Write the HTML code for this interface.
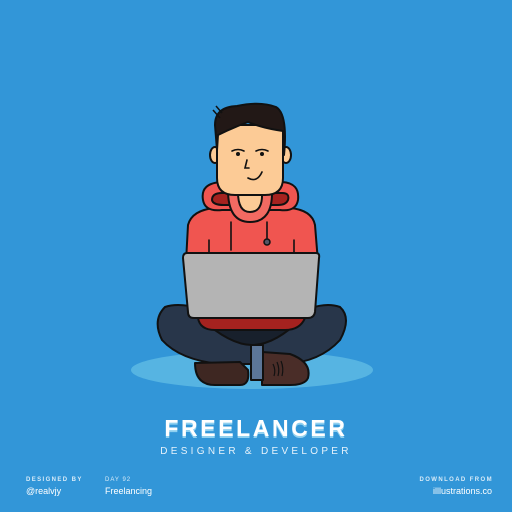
<!DOCTYPE html>
<html><head><style>
body{margin:0;width:512px;height:512px;background:#3296d8;overflow:hidden;position:relative;font-family:"Liberation Sans",sans-serif;color:#fff}
.t{position:absolute;white-space:nowrap}
</style></head><body>
<svg width="512" height="512" style="position:absolute;left:0;top:0">
<ellipse cx="252" cy="370" rx="121" ry="19" fill="#56b4e2"/>
<g stroke="#111" stroke-width="2" stroke-linejoin="round">
<path d="M186 262 L188 225 Q192 210 215 208 L290 208 Q312 210 315 225 L318 262 Z" fill="#f05550"/>
<path d="M203 200 Q200 183 222 182 L282 182 Q300 183 298 200 Q296 212 280 210 L222 210 Q205 212 203 200Z" fill="#f05550"/>
<path d="M212 200 Q212 193 222 193 L282 193 Q290 193 288 200 Q286 205 278 205 L224 205 Q213 205 212 200Z" fill="#a5221f"/>
<path d="M228 190 Q228 222 250 222 Q273 222 272 190Z" fill="#f26a62"/>
<path d="M238 192 Q238 212 250 212 Q263 212 262 192Z" fill="#fccb96"/>
<ellipse cx="215" cy="155" rx="5" ry="8" fill="#fccb96"/>
<ellipse cx="286" cy="155" rx="5" ry="8" fill="#fccb96"/>
<path d="M217 125 L283 125 L283 178 Q283 195 265 195 L235 195 Q217 195 217 178Z" fill="#fccb96"/>
<path d="M217 150 L215 125 Q215 107 237 106 Q260 101 276 107 Q288 114 284 155 L283 131 Q262 128 248 122 Q232 128 218 135 Z" fill="#221816"/>
<path d="M213 110 L220 118 M216 106 L222 113" stroke-width="1.5"/>
</g>
<g stroke="#111" stroke-width="1.6" fill="none" stroke-linecap="round">
<path d="M232 151 Q238 148 244 151"/><path d="M256 151 Q262 148 268 151"/>
<path d="M247 160 L245 168 L249 168"/>
<path d="M248 178 Q257 183 262 172"/>
<path d="M231 222 L231 250 M267 222 L267 238 M209 240 L209 255 M294 240 L294 255"/>
</g>
<circle cx="238" cy="154" r="2" fill="#111"/><circle cx="262" cy="154" r="2" fill="#111"/>
<circle cx="267" cy="242" r="3" fill="#556" stroke="#111" stroke-width="1.5"/>
<g stroke="#111" stroke-width="2" stroke-linejoin="round">
<path d="M165 307 Q185 300 230 318 L290 318 Q320 300 340 307 Q352 318 340 340 Q320 362 285 364 L220 364 Q180 360 162 340 Q152 320 165 307Z" fill="#28364a"/>
<path d="M200 318 Q230 345 252 345 Q275 345 302 318Z" fill="#18202c"/>
<path d="M198 318 L305 318 Q300 330 285 330 L215 330 Q200 330 198 318Z" fill="#a5221f"/>
<path d="M195 363 Q195 385 215 385 L240 385 Q250 385 248 370 L240 362Z" fill="#3e2722"/>
<path d="M262 352 L290 354 Q312 362 308 378 Q305 385 290 385 L262 385Z" fill="#4a2d28"/>
<rect x="251" y="345" width="12" height="35" fill="#5c7698"/>
<path d="M187 253 L316 253 Q320 253 319 258 L315 312 Q314 318 308 318 L194 318 Q188 318 188 312 L183 258 Q183 253 187 253Z" fill="#b4b4b4"/>
</g>
<g stroke="#111" stroke-width="1.2" fill="none"><path d="M273 364 Q276 370 274 376 M277 362 Q280 369 278 376 M281 361 Q284 368 282 376"/></g>
</svg>
<div class="t" style="left:0;width:512px;text-align:center;top:415px;font-size:23px;font-weight:bold;letter-spacing:2.6px;text-shadow:0 2px 0 #8fd0f0">FREELANCER</div>
<div class="t" style="left:0;width:512px;text-align:center;top:446px;font-size:10px;letter-spacing:3.3px;color:#e6f2fb">DESIGNER &amp; DEVELOPER</div>
<div class="t" style="left:26px;top:477px;font-size:6px;font-weight:bold;letter-spacing:1.4px;color:#d8ebf8">DESIGNED BY</div>
<div class="t" style="left:26px;top:486px;font-size:9px">@realvjy</div>
<div class="t" style="left:105px;top:477px;font-size:6px;letter-spacing:1px;color:#d8ebf8">DAY 92</div>
<div class="t" style="left:105px;top:486px;font-size:9px">Freelancing</div>
<div class="t" style="right:19px;top:477px;font-size:6px;font-weight:bold;letter-spacing:1.4px;color:#d8ebf8">DOWNLOAD FROM</div>
<div class="t" style="right:20px;top:486px;font-size:9px">illlustrations.co</div>
</body></html>
